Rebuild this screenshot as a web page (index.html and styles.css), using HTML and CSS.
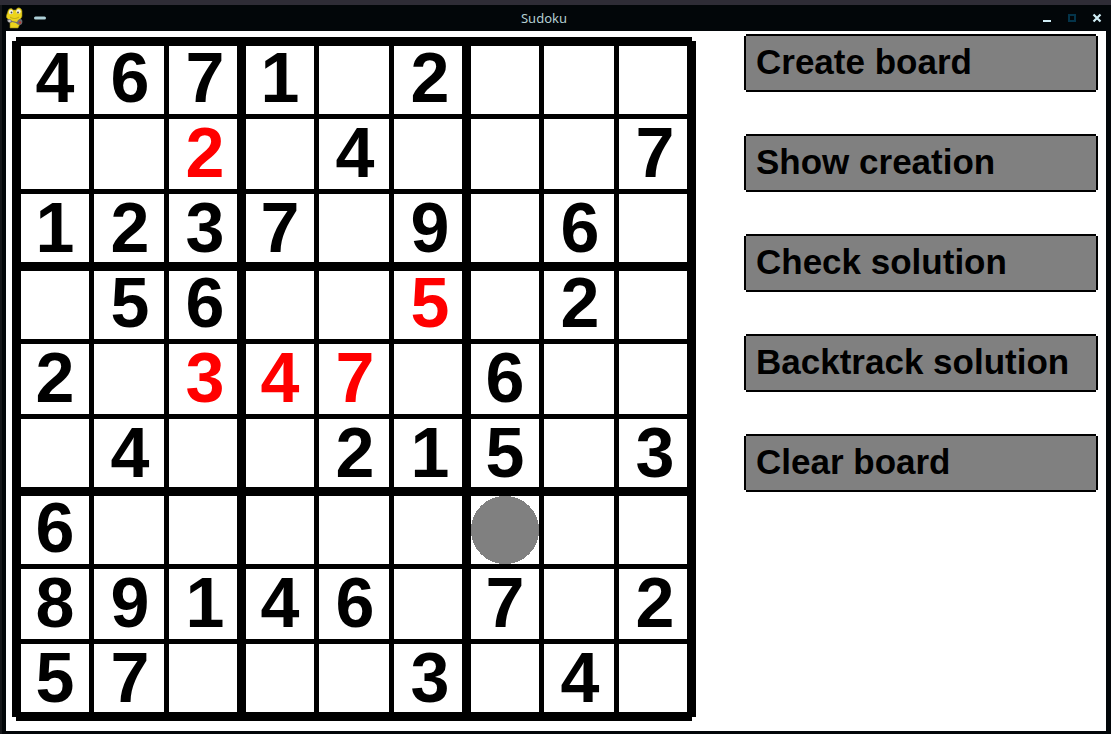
FILE: index.html
```
<!DOCTYPE html>
<html lang="en">
<head>
<meta charset="utf-8">
<title>Sudoku</title>
<link rel="stylesheet" href="styles.css">
</head>
<body>
<div class="window">
  <header class="titlebar">
    <svg class="app-icon" viewBox="0 0 18 22" aria-hidden="true">
      <path d="M4 20l0-5-2-3C0 11 0 9 1 7l1-3C3 1 6 1 7 3h3c1-3 5-3 6 1l0 5c0 2-2 3-3 4l1 4-2 4H4z" fill="#ecd41c" stroke="#94841a" stroke-width=".6"/>
      <circle cx="5" cy="5" r="2.200" fill="#f4f2e0"/><circle cx="12.500" cy="4.500" r="2.200" fill="#f4f2e0"/>
      <circle cx="5.500" cy="5.500" r=".9" fill="#444"/><circle cx="12" cy="5.500" r=".9" fill="#444"/>
      <path d="M4 10c3 2 6 2 9 0" fill="none" stroke="#b09a14" stroke-width=".8"/>
      <path d="M1 13c1-2 4-1 5 1l5 1c1-3 4-4 5-2s0 5-2 5-3-1-4-2l-4-1c-2 2-5 0-5-2z" fill="#6e6e70"/>
      <circle cx="3.500" cy="14" r="1.300" fill="#c4c4c4"/><circle cx="14" cy="15.500" r="1.200" fill="#b83a34"/>
    </svg>
    <button class="title-button" type="button" aria-label="Window menu">
      <svg width="12" height="12" viewBox="0 0 12 12"><path d="M1.500 6h9" stroke="#add0d8" stroke-width="3" stroke-linecap="round"/></svg>
    </button>
    <h1 class="title">Sudoku</h1>
    <div class="window-controls">
      <button class="title-button" type="button" aria-label="Minimize"><svg width="10" height="10" viewBox="0 0 10 10"><path d="M1 8h8" stroke="#d0edf5" stroke-width="2"/></svg></button>
      <button class="title-button" type="button" aria-label="Maximize"><svg width="10" height="10" viewBox="0 0 10 10"><path d="M2 2h6v6H2z" fill="none" stroke="#04344a" stroke-width="2"/></svg></button>
      <button class="title-button" type="button" aria-label="Close"><svg width="10" height="10" viewBox="0 0 10 10"><path d="M1.500 1.500l7 7M8.500 1.500l-7 7" stroke="#d0edf5" stroke-width="2.200"/></svg></button>
    </div>
  </header>
  <main class="content">
    <table class="board" aria-label="Sudoku board">
      <tbody>
        <tr><td>4</td><td>6</td><td>7</td><td>1</td><td></td><td>2</td><td></td><td></td><td></td></tr>
        <tr><td></td><td></td><td class="wrong">2</td><td></td><td>4</td><td></td><td></td><td></td><td>7</td></tr>
        <tr><td>1</td><td>2</td><td>3</td><td>7</td><td></td><td>9</td><td></td><td>6</td><td></td></tr>
        <tr><td></td><td>5</td><td>6</td><td></td><td></td><td class="wrong">5</td><td></td><td>2</td><td></td></tr>
        <tr><td>2</td><td></td><td class="wrong">3</td><td class="wrong">4</td><td class="wrong">7</td><td></td><td>6</td><td></td><td></td></tr>
        <tr><td></td><td>4</td><td></td><td></td><td>2</td><td>1</td><td>5</td><td></td><td>3</td></tr>
        <tr><td>6</td><td></td><td></td><td></td><td></td><td></td><td class="selected"></td><td></td><td></td></tr>
        <tr><td>8</td><td>9</td><td>1</td><td>4</td><td>6</td><td></td><td>7</td><td></td><td>2</td></tr>
        <tr><td>5</td><td>7</td><td></td><td></td><td></td><td>3</td><td></td><td>4</td><td></td></tr>
      </tbody>
    </table>
    <nav class="actions" aria-label="Board actions">
      <button class="action" type="button">Create board</button>
      <button class="action" type="button">Show creation</button>
      <button class="action" type="button">Check solution</button>
      <button class="action" type="button">Backtrack solution</button>
      <button class="action" type="button">Clear board</button>
    </nav>
  </main>
</div>
</body>
</html>
```
FILE: styles.css
```
* { box-sizing: border-box; }

body {
  margin: 0;
  padding: 5px 0 0 2px;
  min-height: 100vh;
  display: flex;
  background: linear-gradient(#2e2c36 5px, #15171a 5px);
  font-family: "Liberation Sans", Arial, sans-serif;
}

.window {
  flex: 1;
  display: flex;
  flex-direction: column;
  padding: 0 5px 3px 4px;
  background: #020609;
}

.titlebar {
  display: flex;
  align-items: center;
  gap: 10px;
  height: 26px;
}

.app-icon { width: 18px; height: 22px; }

.title-button {
  display: flex;
  padding: 0;
  border: 0;
  background: none;
}

.title {
  flex: 1;
  margin: 0;
  text-align: center;
  font: 13px/20px "Noto Sans", sans-serif;
  color: #b4ced2;
}

.window-controls {
  display: flex;
  gap: 15px;
  padding-right: 4px;
}

.content {
  flex: 1;
  display: flex;
  align-items: flex-start;
  gap: 50px;
  padding: 5px 10px 10px 6px;
  background: #fff;
}

.board {
  flex: none;
  margin-top: 1px;
  table-layout: fixed;
  width: 684px;
  border-collapse: separate;
  border-spacing: 0;
  border: solid #000;
  border-width: 9px 0 0 9px;
  clip-path: polygon(4px 0, calc(100% - 4px) 0, calc(100% - 4px) 4px, 100% 4px, 100% calc(100% - 4px), calc(100% - 4px) calc(100% - 4px), calc(100% - 4px) 100%, 4px 100%, 4px calc(100% - 4px), 0 calc(100% - 4px), 0 4px, 4px 4px);
}

.board td {
  width: 73px;
  height: 73px;
  padding: 0 0 4px;
  border: solid #000;
  border-width: 0 5px 5px 0;
  text-align: center;
  vertical-align: middle;
  font-size: 70px;
  line-height: 60px;
  font-weight: bold;
}

.board td:nth-child(3n + 2) { width: 75px; padding-left: 2px; }
.board td:nth-child(3n) { width: 77px; padding-left: 4px; border-right-width: 9px; }
.board tr:nth-child(3n + 2) td { height: 75px; padding-bottom: 2px; }
.board tr:nth-child(3n) td { height: 77px; padding-bottom: 0; border-bottom-width: 9px; }

.board .wrong { color: #f00; }
.board .selected { background: radial-gradient(circle, #808080 34px, transparent 34px); }

.actions {
  flex: 1;
  display: flex;
  flex-direction: column;
  gap: 46px;
}

.action {
  height: 54px;
  padding: 0 10px 2px;
  border: 0;
  background: #808080;
  box-shadow: 0 -2px #000, 0 2px #000, -2px 0 #000, 2px 0 #000;
  color: #000;
  text-align: left;
  font: bold 35px/52px "Liberation Sans", Arial, sans-serif;
}
```
